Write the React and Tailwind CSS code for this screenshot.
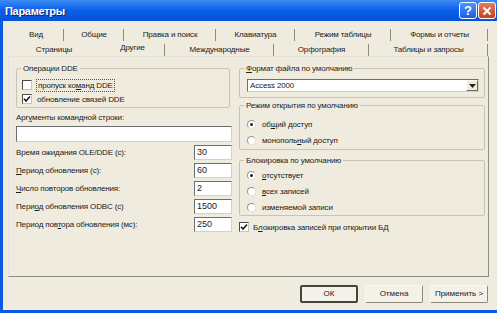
import React from "react";

const font = "font-['Liberation_Sans',Arial,sans-serif]";
const t = "text-[8px] tracking-[-0.15px] leading-[11px]";

function Box({ checked }) {
  return (
    <span className="w-[10px] h-[10px] shrink-0 border border-[#4b4b4b] border-r-[#c9c6b8] border-b-[#c9c6b8] bg-white flex items-center justify-center">
      {checked && (
        <svg width="8" height="8" viewBox="0 0 8 8">
          <path d="M1 3.8 L3 6 L7 1.5" fill="none" stroke="#1e1e1e" strokeWidth="1.6" />
        </svg>
      )}
    </span>
  );
}

function Radio({ on }) {
  return (
    <span className="w-[9px] h-[9px] shrink-0 rounded-full border border-[#9a978a] border-r-[#e4e1d4] border-b-[#e4e1d4] bg-white flex items-center justify-center">
      {on && <span className="w-[3px] h-[3px] rounded-full bg-[#222]" />}
    </span>
  );
}

function Group({ title, className = "", inner = "", children }) {
  return (
    <fieldset className={`border border-[#c7c4b3] rounded-[2px] ${className}`}>
      <legend className={`ml-[4px] px-[2px] ${t} text-[#222]`}>{title}</legend>
      <div className={inner}>{children}</div>
    </fieldset>
  );
}

function Field({ label, value, className = "" }) {
  return (
    <div className={`flex items-center justify-between h-[15px] ${className}`}>
      <span className={t}>{label}</span>
      <span className="w-[38px] h-[15px] bg-white border border-[#6d6d6d] border-r-[#d4d1c4] border-b-[#d4d1c4] text-[9px] leading-[13px] pl-[2px]">
        {value}
      </span>
    </div>
  );
}

function Tab({ w, children, sep = true, sel = false }) {
  return (
    <div className="h-full flex items-center justify-center relative" style={{ width: w }}>
      <span className={`${t} ${sel ? "-mt-[3px]" : ""}`}>{children}</span>
      {sep && <span className="absolute right-0 bottom-0 w-[1px] h-[12px] bg-[#8d8a7e]" />}
    </div>
  );
}

function Btn({ children, def }) {
  return (
    <div
      className={`w-[58px] h-[18px] flex items-center justify-center text-[8px] rounded-[2px] bg-[#f3f1e8] ${
        def
          ? "border-2 border-[#45443f]"
          : "border border-[#f7f6f0] border-r-[#8a877a] border-b-[#8a877a]"
      }`}
    >
      {children}
    </div>
  );
}

export default function App() {
  return (
    <div className={`w-[497px] h-[313px] overflow-hidden flex flex-col bg-[#0a5ae4] ${font} text-[#1a1a1a]`}>
      {/* title bar */}
      <div className="h-[21px] shrink-0 flex items-center justify-between bg-gradient-to-b from-[#3b8cf5] via-[#0a5de8] to-[#0653d8] pl-[5px] pr-[1px]">
        <span className="text-white font-bold text-[11px] tracking-[-0.3px] leading-[14px] [text-shadow:1px_1px_0_#0a2a7a]">
          Параметры
        </span>
        <div className="flex gap-[1px] items-center">
          <div className="w-[18px] h-[17px] rounded-[3px] border border-white bg-gradient-to-b from-[#4a94ff] to-[#1a5ee0] flex items-center justify-center text-white font-bold text-[13px] leading-none">
            ?
          </div>
          <div className="w-[18px] h-[17px] rounded-[3px] border border-white bg-gradient-to-b from-[#e8795a] to-[#c4401c] flex items-center justify-center">
            <svg width="10" height="10" viewBox="0 0 10 10">
              <path d="M1.5 1.5 L8.5 8.5 M8.5 1.5 L1.5 8.5" stroke="white" strokeWidth="2" />
            </svg>
          </div>
        </div>
      </div>

      {/* body */}
      <div className="flex-1 flex pl-[3px] pb-[3px]">
        <div className="flex-1 bg-[#efecdf] flex flex-col pl-[5px] pr-[8px]">
          {/* tabs row 1 */}
          <div className="h-[14px] mt-[6px] flex">
            <Tab w={56}>Вид</Tab>
            <Tab w={60}>Общие</Tab>
            <Tab w={92}>Правка и поиск</Tab>
            <Tab w={79}>Клавиатура</Tab>
            <Tab w={96}>Режим таблицы</Tab>
            <Tab w={97}>Формы и отчеты</Tab>
          </div>
          {/* tabs row 2 */}
          <div className="h-[15px] pt-[1px] flex">
            <Tab w={92} sep={false}>Страницы</Tab>
            <Tab w={65} sel>Другие</Tab>
            <Tab w={109}>Международные</Tab>
            <Tab w={95}>Орфография</Tab>
            <Tab w={119}>Таблицы и запросы</Tab>
          </div>

          {/* panel */}
          <div className="h-[221px] border border-[#e6e3d6] border-r-[#8f8c80] border-b-[#8f8c80] flex pl-[7px] pt-[6px] gap-[7px]">
            {/* left column */}
            <div className="w-[216px] flex flex-col">
              <Group title="Операции DDE" className="w-[214px]" inner="pl-[5px] pb-[2px]">
                <div className="flex items-center h-[12px] mt-[5px] gap-[4px]">
                  <Box />
                  <span className={`${t} leading-[10px] border border-dotted border-[#555] px-[1px]`}>
                    пропуск ко<u>м</u>анд DDE
                  </span>
                </div>
                <div className="flex items-center h-[12px] mt-[2px] gap-[5px]">
                  <Box checked />
                  <span className={t}>обновление связей DDE</span>
                </div>
              </Group>
              <span className={`${t} mt-[4px]`}>
                Арг<u>у</u>менты командной строки:
              </span>
              <span className="h-[16px] mt-[3px] bg-white border border-[#6d6d6d] border-r-[#d4d1c4] border-b-[#d4d1c4]" />
              <Field className="mt-[3px]" label={<>Время ожидания OLE/DDE (с):</>} value="30" />
              <Field className="mt-[3px]" label={<><u>П</u>ериод обновления (с):</>} value="60" />
              <Field className="mt-[3px]" label={<><u>Ч</u>исло повторов обновления:</>} value="2" />
              <Field className="mt-[3px]" label={<>Пери<u>о</u>д обновления ODBC (с)</>} value="1500" />
              <Field className="mt-[3px]" label={<>Период пов<u>т</u>ора обновления (мс):</>} value="250" />
            </div>

            {/* right column */}
            <div className="w-[246px] flex flex-col">
              <Group title={<><u>Ф</u>ормат файла по умолчанию</>} inner="pl-[7px] pr-[5px] pb-[5px]">
                <div className="mt-[5px] h-[13px] bg-white border border-[#6d6d6d] border-r-[#d4d1c4] border-b-[#d4d1c4] flex items-center justify-between">
                  <span className={`${t} pl-[2px]`}>Access 2000</span>
                  <span className="w-[12px] h-[11px] bg-[#efecdf] border border-[#fbfaf5] border-r-[#6f6d64] border-b-[#6f6d64] flex items-center justify-center">
                    <svg width="7" height="4" viewBox="0 0 7 4">
                      <path d="M0 0 H7 L3.5 4 Z" fill="#222" />
                    </svg>
                  </span>
                </div>
              </Group>

              <Group title="Режим открытия по умолчанию" className="mt-[2px]" inner="pl-[7px] pb-[3px]">
                <div className="flex items-center h-[12px] mt-[7px] gap-[6px]">
                  <Radio on />
                  <span className={t}>об<u>щ</u>ий доступ</span>
                </div>
                <div className="flex items-center h-[12px] mt-[4px] gap-[6px]">
                  <Radio />
                  <span className={t}>монополь<u>н</u>ый доступ</span>
                </div>
              </Group>

              <Group title="Блокировка по умолчанию" className="mt-[5px]" inner="pl-[7px] pb-[2px]">
                <div className="flex items-center h-[12px] mt-[3px] gap-[6px]">
                  <Radio on />
                  <span className={t}><u>о</u>тсутствует</span>
                </div>
                <div className="flex items-center h-[12px] mt-[4px] gap-[6px]">
                  <Radio />
                  <span className={t}><u>в</u>сех записей</span>
                </div>
                <div className="flex items-center h-[12px] mt-[4px] gap-[6px]">
                  <Radio />
                  <span className={t}>изменяемой записи</span>
                </div>
              </Group>

              <div className="flex items-center h-[12px] mt-[5px] gap-[4px]">
                <Box checked />
                <span className={t}>
                  Б<u>л</u>окировка записей при открытии БД
                </span>
              </div>
            </div>
          </div>

          {/* buttons */}
          <div className="mt-[8px] flex justify-end gap-[7px] pr-[1px]">
            <Btn def>ОК</Btn>
            <Btn>Отмена</Btn>
            <Btn>Применить &gt;</Btn>
          </div>
        </div>
      </div>
    </div>
  );
}
